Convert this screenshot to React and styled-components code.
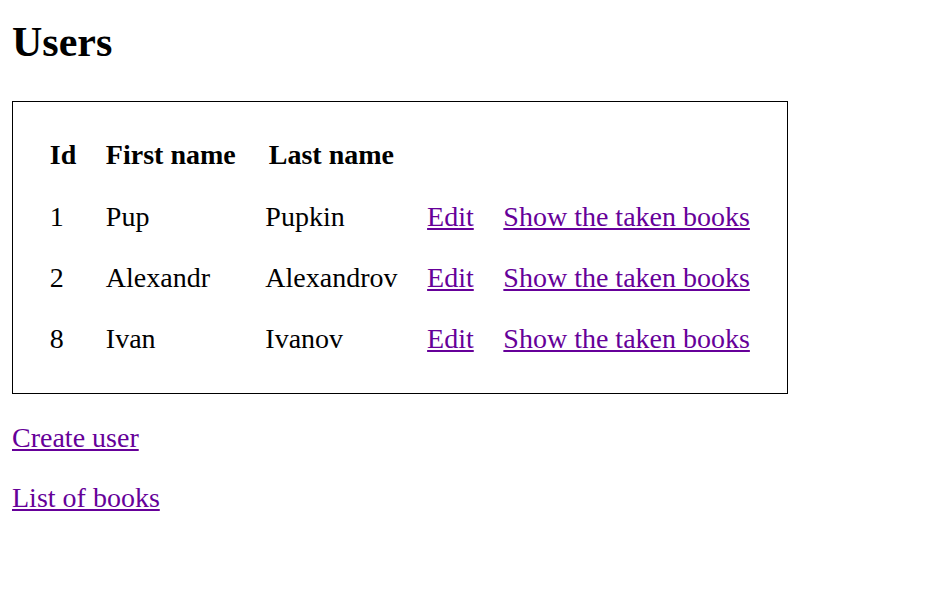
import React from "react";
import styled, { createGlobalStyle } from "styled-components";

const Global = createGlobalStyle`
  html, body { margin: 0; padding: 0; background: #fff; }
  body {
    font-family: "Liberation Serif", "Times New Roman", serif;
    font-size: 28px;
    color: #000;
  }
`;

const Page = styled.div`
  padding: 12px;
`;

const Title = styled.h1`
  font-size: 42px;
  font-weight: bold;
  line-height: normal;
  margin: 6px 0 35px;
`;

const Card = styled.div`
  width: fit-content;
  border: 1px solid #000;
  padding: 22.5px 22px;
`;

const Table = styled.table`
  border-collapse: separate;
  border-spacing: 0;
  font-size: 28px;
`;

const Th = styled.th`
  padding: 14.7px 14.8px;
  font-weight: bold;
  text-align: center;
  line-height: normal;
`;

const Td = styled.td`
  padding: 14.7px 14.8px;
  text-align: left;
  line-height: normal;
`;

const Link = styled.a`
  color: #660099;
  text-decoration: underline;
  cursor: pointer;
`;

const Para = styled.p`
  margin: 28px 0;
  line-height: normal;
`;

const users = [
  { id: 1, first: "Pup", last: "Pupkin" },
  { id: 2, first: "Alexandr", last: "Alexandrov" },
  { id: 8, first: "Ivan", last: "Ivanov" },
];

export default function App() {
  return (
    <>
      <Global />
      <Page>
        <Title>Users</Title>
        <Card>
          <Table>
            <thead>
              <tr>
                <Th>Id</Th>
                <Th>First name</Th>
                <Th>Last name</Th>
                <Th></Th>
                <Th></Th>
              </tr>
            </thead>
            <tbody>
              {users.map((u) => (
                <tr key={u.id}>
                  <Td>{u.id}</Td>
                  <Td>{u.first}</Td>
                  <Td>{u.last}</Td>
                  <Td>
                    <Link href="#">Edit</Link>
                  </Td>
                  <Td>
                    <Link href="#">Show the taken books</Link>
                  </Td>
                </tr>
              ))}
            </tbody>
          </Table>
        </Card>
        <Para>
          <Link href="#">Create user</Link>
        </Para>
        <Para>
          <Link href="#">List of books</Link>
        </Para>
      </Page>
    </>
  );
}
